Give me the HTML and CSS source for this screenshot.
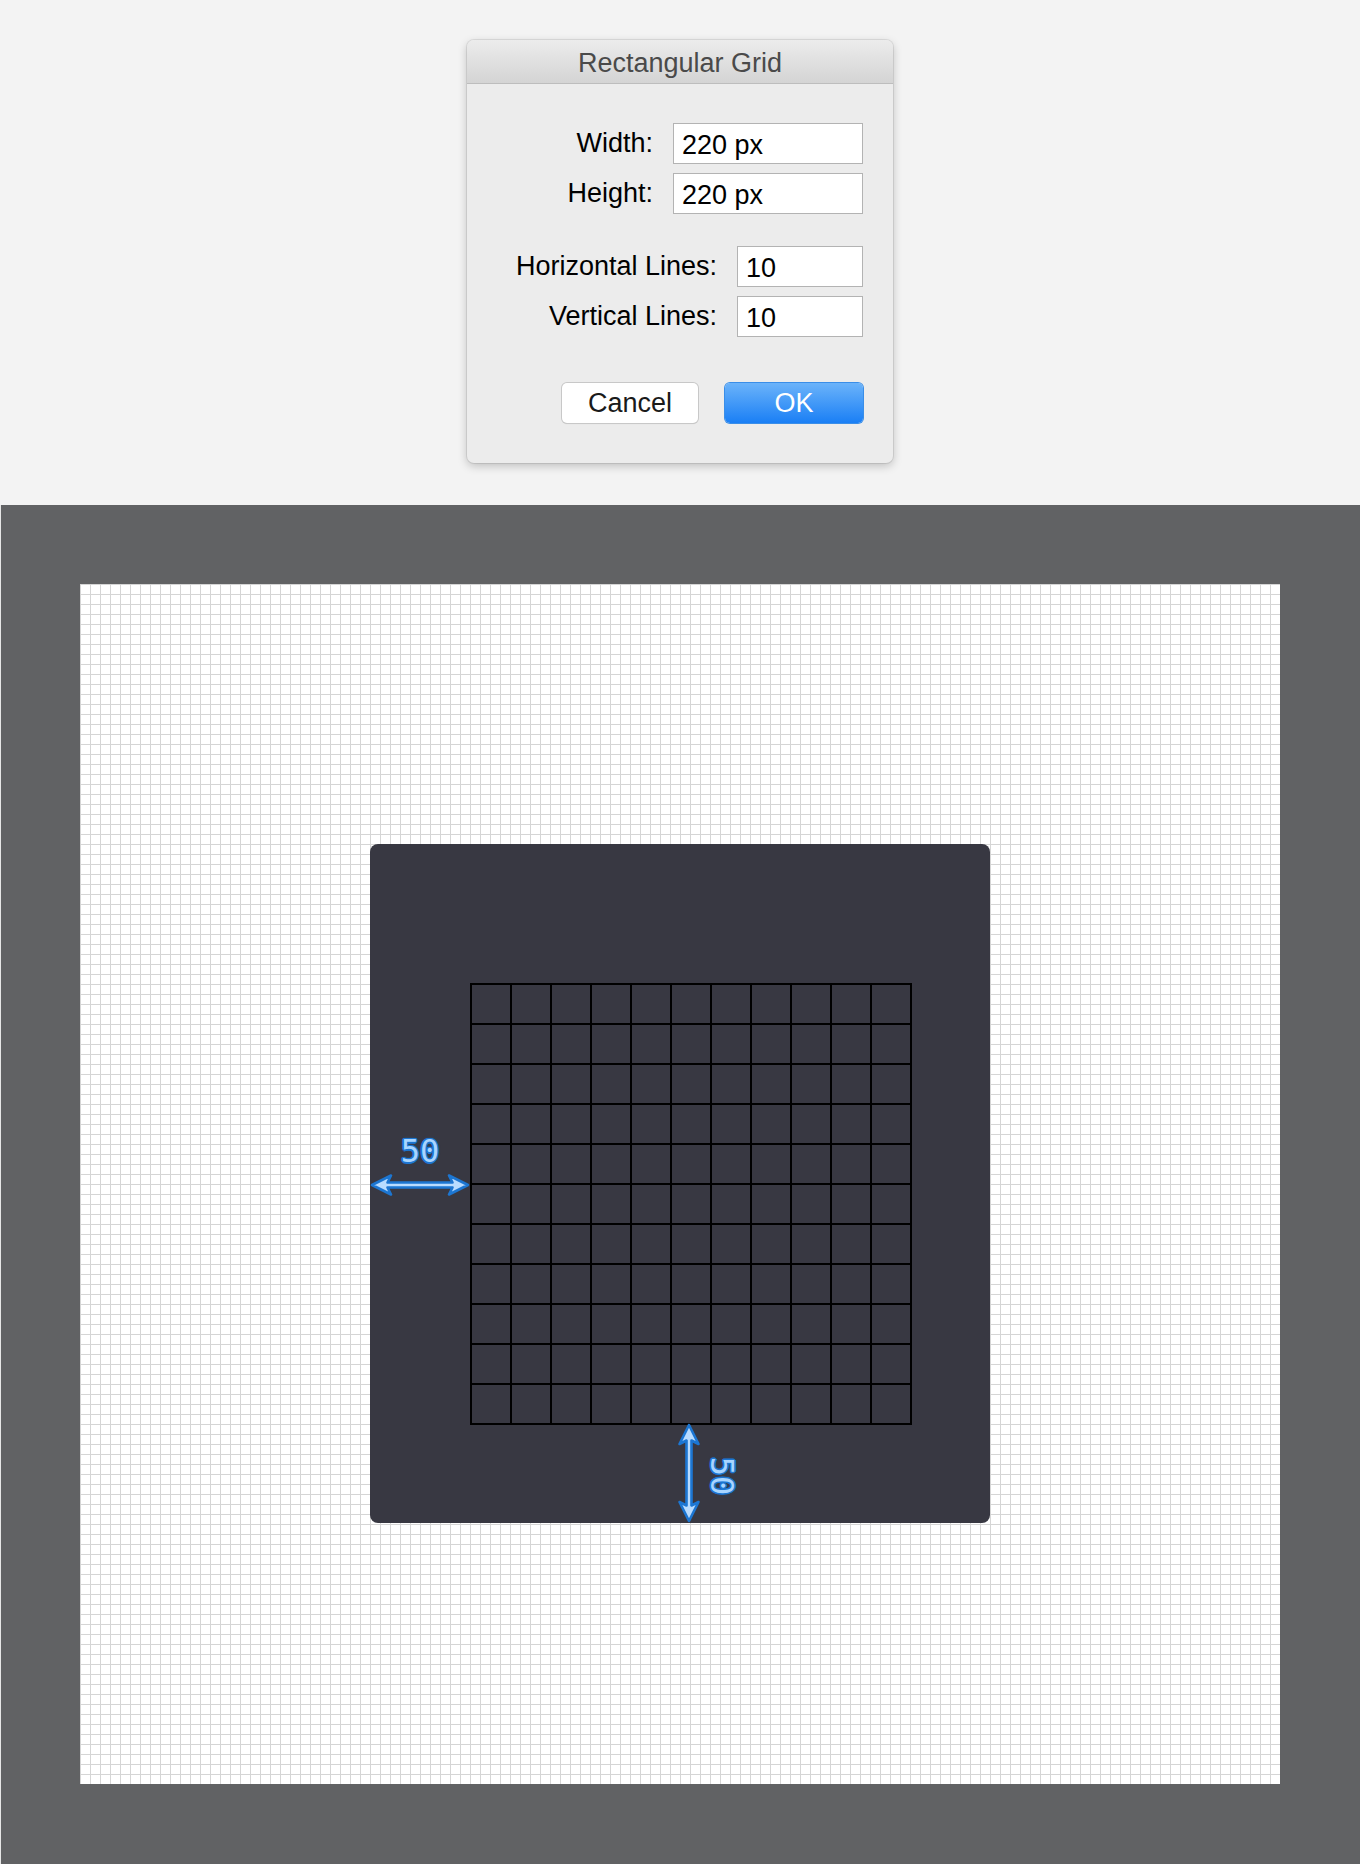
FILE: index.html
```html
<!DOCTYPE html>
<html>
<head>
<meta charset="utf-8">
<title>Rectangular Grid</title>
<link rel="stylesheet" href="styles.css">
</head>
<body>
<section class="top">
  <div class="dialog">
    <div class="titlebar">Rectangular Grid</div>
    <div class="form">
      <div class="group">
        <div class="row"><span class="label">Width:</span><div class="field wide">220 px</div></div>
        <div class="row"><span class="label">Height:</span><div class="field wide">220 px</div></div>
      </div>
      <div class="group">
        <div class="row"><span class="label">Horizontal Lines:</span><div class="field narrow">10</div></div>
        <div class="row"><span class="label">Vertical Lines:</span><div class="field narrow">10</div></div>
      </div>
      <div class="buttons">
        <div class="btn cancel">Cancel</div>
        <div class="btn ok">OK</div>
      </div>
    </div>
  </div>
</section>
<section class="stage">
  <div class="canvas">
    <div class="artboard">
      <div class="grid"></div>
      <svg class="arrow-h" width="100" height="26" viewBox="0 0 100 26">
        <path d="M2 13 L21 3.5 L17.5 10.5 L82.5 10.5 L79 3.5 L98 13 L79 22.5 L82.5 15.5 L17.5 15.5 L21 22.5 Z" fill="#b9dcff" stroke="#1c76d2" stroke-width="2.6" stroke-linejoin="round"/>
      </svg>
      <span class="dim dim-h">50</span>
      <svg class="arrow-v" width="26" height="100" viewBox="0 0 26 100">
        <path d="M13 2 L3.5 21 L10.5 17.5 L10.5 82.5 L3.5 79 L13 98 L22.5 79 L15.5 82.5 L15.5 17.5 L22.5 21 Z" fill="#b9dcff" stroke="#1c76d2" stroke-width="2.6" stroke-linejoin="round"/>
      </svg>
      <span class="dim dim-v">50</span>
    </div>
  </div>
</section>
</body>
</html>
```
FILE: styles.css
```css
* { box-sizing: border-box; }
html, body { margin: 0; padding: 0; }
body {
  width: 1360px;
  background: #f3f3f3;
  font-family: "Liberation Sans", Arial, sans-serif;
}
.top {
  height: 505px;
  padding-top: 40px;
  display: flex;
  justify-content: center;
  background: #f3f3f3;
}
.dialog {
  width: 426px;
  height: 423px;
  background: #ececec;
  border-radius: 7px;
  box-shadow: 0 0 0 1px rgba(0,0,0,0.08), 0 3px 10px rgba(0,0,0,0.22);
  overflow: hidden;
}
.titlebar {
  height: 44px;
  border-bottom: 1px solid #bdbdbd;
  background: linear-gradient(#ececec, #d4d4d4);
  color: #4a4a4a;
  font-size: 27px;
  line-height: 44px;
  text-align: center;
  padding-top: 1px;
}
.form {
  padding: 39px 30px 40px 30px;
  display: flex;
  flex-direction: column;
  gap: 32px;
}
.group {
  display: flex;
  flex-direction: column;
  gap: 9px;
}
.row {
  display: flex;
  justify-content: flex-end;
  align-items: center;
  gap: 20px;
  height: 41px;
}
.label {
  font-size: 27px;
  color: #000;
  line-height: 41px;
}
.field {
  height: 41px;
  background: #fff;
  border: 1px solid #b3b3b3;
  font-size: 27px;
  color: #000;
  line-height: 43px;
  padding-left: 8px;
}
.field.wide { width: 190px; }
.field.narrow { width: 126px; }
.buttons {
  display: flex;
  justify-content: flex-end;
  gap: 27px;
  margin-top: 14px;
}
.btn {
  height: 40px;
  border-radius: 5px;
  font-size: 27px;
  line-height: 40px;
  text-align: center;
}
.btn.cancel {
  width: 136px;
  background: #fff;
  color: #1a1a1a;
  box-shadow: 0 0 0 1px #c8c8c8, 0 1px 1px rgba(0,0,0,0.15);
}
.btn.ok {
  width: 138px;
  background: linear-gradient(#6bb3fa, #1a7ff5);
  color: #fff;
  box-shadow: 0 0 0 1px #3a8ee8;
}
.stage {
  height: 1359px;
  background: #616264;
  border-left: 1px solid #e6e6e6;
  padding: 79px 80px 80px 79px;
}
.canvas {
  width: 1200px;
  height: 1200px;
  background-color: #fff;
  background-image:
    linear-gradient(to right, #d5d5d5 1px, transparent 1px),
    linear-gradient(to bottom, #d5d5d5 1px, transparent 1px);
  background-size: 10px 10px;
  padding-top: 260px;
  padding-left: 290px;
}
.artboard {
  position: relative;
  width: 620px;
  height: 679px;
  background: #383842;
  border-radius: 8px;
  padding-top: 139px;
  padding-left: 100px;
}
.grid {
  width: 442px;
  height: 442px;
  background-image:
    linear-gradient(to right, #000 2px, transparent 2px),
    linear-gradient(to bottom, #000 2px, transparent 2px);
  background-size: 40px 40px;
}
.arrow-h {
  position: absolute;
  left: 0;
  top: 328px;
  overflow: visible;
}
.arrow-v {
  position: absolute;
  left: 306px;
  top: 579px;
  overflow: visible;
}
.dim {
  position: absolute;
  font-family: "DejaVu Sans Mono", "Liberation Mono", monospace;
  font-size: 32px;
  line-height: 32px;
  color: #a9d5ff;
  font-variant-numeric: slashed-zero;
  text-shadow:
    1.5px 0 0 #1c76d2, -1.5px 0 0 #1c76d2, 0 1.5px 0 #1c76d2, 0 -1.5px 0 #1c76d2,
    1px 1px 0 #1c76d2, -1px -1px 0 #1c76d2, 1px -1px 0 #1c76d2, -1px 1px 0 #1c76d2,
    0 0 3px #1c76d2;
}
.dim-h {
  left: 0;
  top: 291px;
  width: 100px;
  text-align: center;
}
.dim-v {
  left: 352px;
  top: 632px;
  width: 60px;
  text-align: center;
  transform: translate(-50%, -50%) rotate(90deg);
}
```
